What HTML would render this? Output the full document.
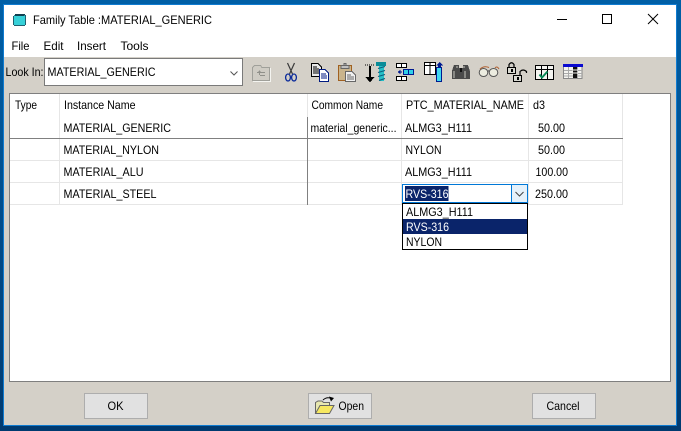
<!DOCTYPE html>
<html><head><meta charset="utf-8"><title>Family Table</title>
<style>
html,body{margin:0;padding:0;width:681px;height:431px;overflow:hidden;background:#00589c}
svg{display:block;position:absolute;left:0;top:0}
text{font-family:"Liberation Sans",sans-serif;font-size:12px;fill:#000;white-space:pre}
</style></head><body>
<svg width="681" height="431" viewBox="0 0 681 431" xmlns="http://www.w3.org/2000/svg" shape-rendering="crispEdges">
<defs><linearGradient id="bg" x1="0" y1="0" x2="0" y2="1"><stop offset="0" stop-color="#005fa6"/><stop offset="1" stop-color="#003a70"/></linearGradient></defs>
<rect width="681" height="431" fill="url(#bg)"/>
<rect x="3" y="4" width="674" height="422" fill="#0f7bd0"/>
<rect x="4" y="5" width="672" height="420" fill="#d4d0c8"/>
<rect x="4" y="5" width="672" height="52" fill="#fff"/>

<!-- title icon -->
<g>
<rect x="14" y="15" width="11" height="10" fill="#36d0d8"/>
<path d="M14.5 15.5h10M15 14.5h10" stroke="#104050" fill="none"/>
<path d="M13.5 16v9M14 25.5h11M25.5 15v10" stroke="#206070" fill="none"/>
</g>
<text x="33" y="24" textLength="179" lengthAdjust="spacingAndGlyphs">Family Table :MATERIAL_GENERIC</text>
<!-- window controls -->
<rect x="557" y="19" width="10" height="1" fill="#000"/>
<rect x="602.5" y="14.5" width="9" height="9" fill="none" stroke="#000"/>
<path d="M648 14L658 24M658 14L648 24" stroke="#000" fill="none" shape-rendering="geometricPrecision"/>
<!-- menu -->
<text x="11.5" y="50" textLength="18" lengthAdjust="spacingAndGlyphs">File</text>
<text x="43.5" y="50" textLength="20" lengthAdjust="spacingAndGlyphs">Edit</text>
<text x="77" y="50" textLength="29" lengthAdjust="spacingAndGlyphs">Insert</text>
<text x="120.5" y="50" textLength="28" lengthAdjust="spacingAndGlyphs">Tools</text>

<!-- look in -->
<text x="5.5" y="76" textLength="38" lengthAdjust="spacingAndGlyphs">Look In:</text>
<rect x="44.5" y="58.5" width="198" height="27" fill="#fff" stroke="#7a7a7a"/>
<text x="47.5" y="76" textLength="108" lengthAdjust="spacingAndGlyphs">MATERIAL_GENERIC</text>
<path d="M230.5 71.5L234 75L237.5 71.5" fill="none" stroke="#555" shape-rendering="geometricPrecision"/>

<!-- toolbar icons -->
<!-- folder up (disabled) -->
<g fill="none">
<path d="M252.5 80.5V67.5L254.5 65.500H260.500L262 67.500H269.500V80.500Z" stroke="#a0a09a" fill="#cfccc4"/>
<path d="M253 81.500H270.500M270.500 68V82" stroke="#f4f4f0"/>
<path d="M257 72.500H265M259.500 70.500V75M258.500 71.500h2M260 75.500h5" stroke="#90908a"/>
</g>
<!-- scissors -->
<g fill="none" shape-rendering="geometricPrecision">
<path d="M287.500 63L292.500 74M294.500 63L289.500 74" stroke="#3a3a3a" stroke-width="1.200"/>
<ellipse cx="288" cy="77.500" rx="2.400" ry="3.500" stroke="#0a2a9a" stroke-width="1.300"/>
<ellipse cx="294" cy="77.500" rx="2.400" ry="3.500" stroke="#0a2a9a" stroke-width="1.300"/>
</g>
<!-- copy -->
<g>
<path d="M311.500 63.500H318L321.500 67V76.500H311.500Z" fill="#e8e8e8" stroke="#000"/>
<path d="M313 67h4M313 69h6M313 71h6M313 73h6" stroke="#000" fill="none"/>
<path d="M319.500 69.500H325L328.500 73V81.500H319.500Z" fill="#fff" stroke="#001a80"/>
<path d="M319 69h6v1h-6zM319 81h10v1h-10z" fill="#001a80"/>
<path d="M321 74h5M321 76h6M321 78h6" stroke="#001a80" fill="none"/>
</g>
<!-- paste -->
<g>
<rect x="338.500" y="65.500" width="13" height="15" fill="#c9b48c" stroke="#a06020"/>
<path d="M341 65.500H349V68.500H341Z" fill="#c0c0c0" stroke="#666"/>
<path d="M344 63.500h2v2h-2z" fill="#c0c0c0" stroke="#666"/>
<path d="M345.500 71.500H352L355.500 75V81.500H345.500Z" fill="#f0f0f0" stroke="#666"/>
<path d="M347 75h4M347 77h7M347 79h7" stroke="#666" fill="none"/>
</g>
<!-- dim + screw -->
<g>
<path d="M365 65h1M367 65h1M369 65h1M371 65h1M373 65h1" stroke="#000" fill="none"/>
<rect x="369" y="66" width="2" height="12" fill="#000"/>
<path d="M365.500 77h9L370 82.500Z" fill="#000"/>
<rect x="376" y="62" width="10" height="4" fill="#0a8c98"/>
<rect x="379" y="66" width="5" height="15" fill="#27c0c8"/>
<path d="M378 68.500l7-2M378 72.500l7-2M378 76.500l7-2M379 80.500l6-2" stroke="#0a5a78" fill="none" shape-rendering="geometricPrecision"/>
</g>
<!-- rows insert -->
<g>
<rect x="396.500" y="63.500" width="5" height="4" fill="#fff" stroke="#000"/>
<rect x="401.500" y="63.500" width="5" height="4" fill="#fff" stroke="#000"/>
<rect x="396.500" y="76.500" width="5" height="4" fill="#fff" stroke="#000"/>
<rect x="401.500" y="76.500" width="5" height="4" fill="#fff" stroke="#000"/>
<path d="M398 72h4M400 70v4M399 71v2" stroke="#001a90" fill="none"/>
<rect x="403.500" y="69.500" width="5" height="5" fill="#30d0e8" stroke="#001a90"/>
<rect x="408.500" y="69.500" width="5" height="5" fill="#30d0e8" stroke="#001a90"/>
</g>
<!-- columns insert -->
<g>
<rect x="424.500" y="62.500" width="5.500" height="12" fill="#fff" stroke="#000"/>
<rect x="430" y="62.500" width="5.500" height="12" fill="#fff" stroke="#000"/>
<path d="M424 65.500h12" stroke="#000" fill="none"/>
<path d="M436 65.500L439.500 62L443 65.500Z" fill="#001a90"/>
<rect x="438" y="65" width="3" height="2" fill="#001a90"/>
<rect x="436.500" y="67.500" width="5" height="14" fill="#40d8f0" stroke="#001a90"/>
</g>
<!-- binoculars -->
<g>
<path d="M454 65h5v3h2v11h-9V71Z" fill="#4a4a4a"/>
<path d="M463 65h5l2 6v8h-9V68h2Z" fill="#4a4a4a"/>
<path d="M454 71v7M457 66v2M465 71v7M464 66v2" stroke="#c8c8c0" fill="none"/>
<rect x="460" y="68" width="2" height="4" fill="#111"/>
</g>
<!-- glasses -->
<g fill="none" shape-rendering="geometricPrecision">
<ellipse cx="483.500" cy="72.500" rx="4.300" ry="4" fill="#ecece0" stroke="#555"/>
<ellipse cx="493.500" cy="72.500" rx="4.300" ry="4" fill="#ecece0" stroke="#555"/>
<path d="M487.800 71.500Q488.500 70 489.200 71.500" stroke="#555"/>
<path d="M480 69Q484 65.500 489 67.500M495 68Q497 65.500 499 69" stroke="#b06030"/>
</g>
<!-- locks -->
<g>
<rect x="507.500" y="67.500" width="8" height="6" fill="#d8d8d0" stroke="#000"/>
<path d="M509 67V64.500Q511.500 61 514 64.500V67" fill="none" stroke="#000" stroke-width="1.200" shape-rendering="geometricPrecision"/>
<rect x="511" y="69" width="2" height="3" fill="#000"/>
<rect x="513.500" y="75.500" width="8" height="6" fill="#d8d8d0" stroke="#000"/>
<path d="M520 75V71.500Q523 68.500 526.500 71.500V73" fill="none" stroke="#000" stroke-width="1.200" shape-rendering="geometricPrecision"/>
<rect x="517" y="77" width="2" height="3" fill="#000"/>
</g>
<!-- table check -->
<g>
<rect x="535.500" y="65.500" width="18" height="14" fill="#f4f4f0" stroke="#000"/>
<path d="M535 69.500h19M541.500 66v14M547.500 66v14" stroke="#000" fill="none"/>
<path d="M539.500 74.500L542 77.500L547.500 71.500" fill="none" stroke="#0a8a58" stroke-width="2" shape-rendering="geometricPrecision"/>
</g>
<!-- table -->
<g>
<rect x="563.500" y="64.500" width="18.500" height="14" fill="#f4f4f0" stroke="#888"/>
<rect x="563" y="64" width="20" height="3" fill="#0a0ad0"/>
<path d="M564 70.500h18M564 73.500h18M564 76h18M568.500 67v11M577.500 67v11" stroke="#aaa" fill="none"/>
<rect x="573" y="67" width="4" height="11" fill="#111"/>
<path d="M572 70h6M572 73h6" stroke="#f4f4f0" fill="none"/>
</g>

<!-- table area -->
<rect x="9" y="93" width="662" height="289" fill="#7f7f7f"/>
<rect x="10" y="94" width="660" height="287" fill="#fff"/>
<!-- grid -->
<g fill="#e6e6e6">
<rect x="59" y="94" width="1" height="111"/>
<rect x="307" y="94" width="1" height="23"/>
<rect x="401" y="94" width="1" height="111"/>
<rect x="528" y="94" width="1" height="111"/>
<rect x="622" y="94" width="1" height="111"/>
<rect x="10" y="160" width="613" height="1"/>
<rect x="10" y="182" width="613" height="1"/>
<rect x="10" y="204" width="613" height="1"/>
</g>
<rect x="307" y="117" width="1" height="88" fill="#808080"/>
<rect x="10" y="138" width="613" height="1" fill="#808080"/>

<text x="15" y="109" textLength="22" lengthAdjust="spacingAndGlyphs">Type</text>
<text x="64" y="109" textLength="71.500" lengthAdjust="spacingAndGlyphs">Instance Name</text>
<text x="311.500" y="109" textLength="71.500" lengthAdjust="spacingAndGlyphs">Common Name</text>
<text x="406" y="109" textLength="118" lengthAdjust="spacingAndGlyphs">PTC_MATERIAL_NAME</text>
<text x="533" y="109" textLength="12" lengthAdjust="spacingAndGlyphs">d3</text>

<text x="63.500" y="132" textLength="107.500" lengthAdjust="spacingAndGlyphs">MATERIAL_GENERIC</text>
<text x="310.500" y="132" textLength="86" lengthAdjust="spacingAndGlyphs">material_generic...</text>
<text x="405" y="132" textLength="67" lengthAdjust="spacingAndGlyphs">ALMG3_H111</text>
<text x="538" y="132" textLength="27" lengthAdjust="spacingAndGlyphs">50.00</text>

<text x="63.500" y="154" textLength="95.500" lengthAdjust="spacingAndGlyphs">MATERIAL_NYLON</text>
<text x="405.500" y="154" textLength="36" lengthAdjust="spacingAndGlyphs">NYLON</text>
<text x="538" y="154" textLength="27" lengthAdjust="spacingAndGlyphs">50.00</text>

<text x="63.500" y="176" textLength="80" lengthAdjust="spacingAndGlyphs">MATERIAL_ALU</text>
<text x="405" y="176" textLength="67" lengthAdjust="spacingAndGlyphs">ALMG3_H111</text>
<text x="535.500" y="176" textLength="32.500" lengthAdjust="spacingAndGlyphs">100.00</text>

<text x="63.500" y="198" textLength="93" lengthAdjust="spacingAndGlyphs">MATERIAL_STEEL</text>
<text x="535" y="198" textLength="33" lengthAdjust="spacingAndGlyphs">250.00</text>

<!-- editor -->
<rect x="402.500" y="184.500" width="125" height="18" fill="#fff" stroke="#0078d7"/>
<rect x="511.500" y="184.500" width="16" height="18" fill="#e5f1fb" stroke="#0078d7"/>
<path d="M515.500 192L519.500 196L523.500 192" fill="none" stroke="#444" shape-rendering="geometricPrecision"/>
<rect x="405" y="186" width="43.500" height="15" fill="#0a246a"/>
<text x="405.500" y="198" textLength="43" lengthAdjust="spacingAndGlyphs" style="fill:#fff">RVS-316</text>

<!-- dropdown -->
<rect x="402.500" y="203.500" width="125" height="46" fill="#fff" stroke="#000"/>
<rect x="403" y="219" width="124" height="15" fill="#0a246a"/>
<text x="406" y="216" textLength="67" lengthAdjust="spacingAndGlyphs">ALMG3_H111</text>
<text x="406" y="231" textLength="43" lengthAdjust="spacingAndGlyphs" style="fill:#fff">RVS-316</text>
<text x="406" y="246" textLength="36" lengthAdjust="spacingAndGlyphs">NYLON</text>

<!-- buttons -->
<rect x="84.500" y="393.500" width="63" height="25" fill="#e1e1e1" stroke="#adadad"/>
<rect x="308.500" y="393.500" width="63" height="25" fill="#e1e1e1" stroke="#adadad"/>
<rect x="532.500" y="393.500" width="63" height="25" fill="#e1e1e1" stroke="#adadad"/>
<text x="107.500" y="410" textLength="16" lengthAdjust="spacingAndGlyphs">OK</text>
<text x="338.500" y="410" textLength="25.500" lengthAdjust="spacingAndGlyphs">Open</text>
<text x="546.500" y="410" textLength="33" lengthAdjust="spacingAndGlyphs">Cancel</text>
<!-- open icon -->
<g shape-rendering="geometricPrecision">
<path d="M315.500 413.500V402.500L318 401H322L323.500 402.500H329.500V405" fill="#e8e8b0" stroke="#666"/>
<path d="M315.500 413.500L320 405.500H334L329.500 413.500Z" fill="#f6e860" stroke="#666"/>
<path d="M323 400Q327 396.500 331 398.500" fill="none" stroke="#000"/>
<path d="M329 396.500L334 398L331 401.500Z" fill="#000"/>
</g>
</svg>
</body></html>
